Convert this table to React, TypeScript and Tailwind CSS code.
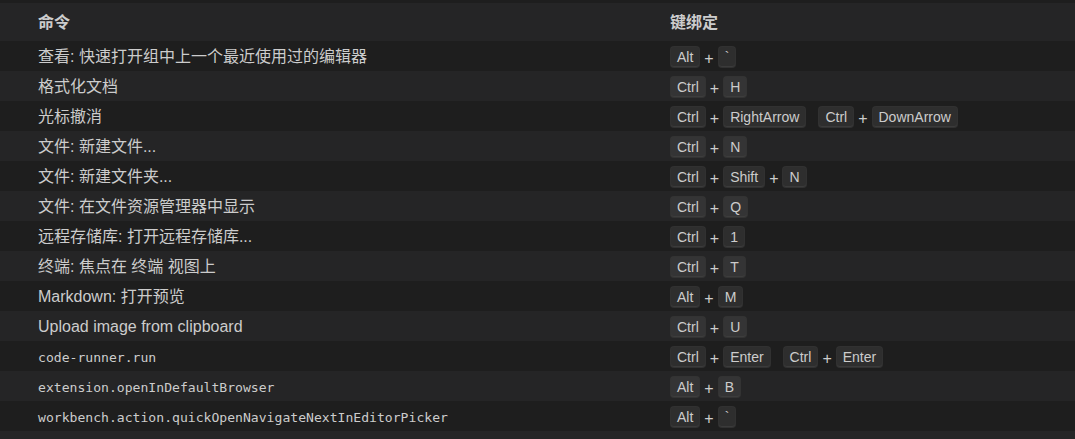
import React from "react";

type Chord = string[];

interface Row {
  command: string;
  mono?: boolean;
  keys: Chord[];
}

const rows: Row[] = [
  { command: "查看: 快速打开组中上一个最近使用过的编辑器", keys: [["Alt", "`"]] },
  { command: "格式化文档", keys: [["Ctrl", "H"]] },
  { command: "光标撤消", keys: [["Ctrl", "RightArrow"], ["Ctrl", "DownArrow"]] },
  { command: "文件: 新建文件...", keys: [["Ctrl", "N"]] },
  { command: "文件: 新建文件夹...", keys: [["Ctrl", "Shift", "N"]] },
  { command: "文件: 在文件资源管理器中显示", keys: [["Ctrl", "Q"]] },
  { command: "远程存储库: 打开远程存储库...", keys: [["Ctrl", "1"]] },
  { command: "终端: 焦点在 终端 视图上", keys: [["Ctrl", "T"]] },
  { command: "Markdown: 打开预览", keys: [["Alt", "M"]] },
  { command: "Upload image from clipboard", keys: [["Ctrl", "U"]] },
  { command: "code-runner.run", mono: true, keys: [["Ctrl", "Enter"], ["Ctrl", "Enter"]] },
  { command: "extension.openInDefaultBrowser", mono: true, keys: [["Alt", "B"]] },
  {
    command: "workbench.action.quickOpenNavigateNextInEditorPicker",
    mono: true,
    keys: [["Alt", "`"]],
  },
];

const sans = "font-['Liberation_Sans','Noto_Sans_CJK_SC',sans-serif]";

function Key({ label }: { label: string }) {
  return (
    <span
      className="flex h-[22px] items-center rounded-[4px] border border-[rgba(51,51,51,0.6)] bg-[rgba(128,128,128,0.17)] px-[6px] text-[14px] text-[#cccccc] shadow-[inset_0_-1px_0_rgba(68,68,68,0.6)]"
    >
      {label}
    </span>
  );
}

function Keybinding({ chords }: { chords: Chord[] }) {
  return (
    <div className="flex items-center gap-3">
      {chords.map((chord, i) => (
        <div key={i} className="flex items-center">
          {chord.map((k, j) => (
            <React.Fragment key={j}>
              {j > 0 && (
                <span className="mx-[4px] pt-[3px] text-[16px] text-[#cccccc]">+</span>
              )}
              <Key label={k} />
            </React.Fragment>
          ))}
        </div>
      ))}
    </div>
  );
}

export default function App() {
  return (
    <div className={`h-[439px] w-[1075px] overflow-hidden bg-[#252526] ${sans}`}>
      <div className="h-[3px] bg-[#1e1e1e]" />

      {/* Header */}
      <div className="flex h-[38px] items-center bg-[#252526] pt-[2px] text-[16px] font-bold text-[#cccccc]">
        <div className="w-[670px] shrink-0 pl-[38px]">命令</div>
        <div>键绑定</div>
      </div>

      {/* Rows */}
      {rows.map((row, i) => (
        <div
          key={i}
          className={`flex h-[30px] items-center pt-[2px] ${i % 2 === 0 ? "bg-[#1e1e1e]" : "bg-[#252526]"}`}
        >
          <div className="w-[670px] shrink-0 pl-[38px]">
            {row.mono ? (
              <span className="font-['DejaVu_Sans_Mono',monospace] text-[13.1px] text-[#cccccc]">
                {row.command}
              </span>
            ) : (
              <span className="text-[16px] text-[#cccccc]">{row.command}</span>
            )}
          </div>
          <Keybinding chords={row.keys} />
        </div>
      ))}
    </div>
  );
}
